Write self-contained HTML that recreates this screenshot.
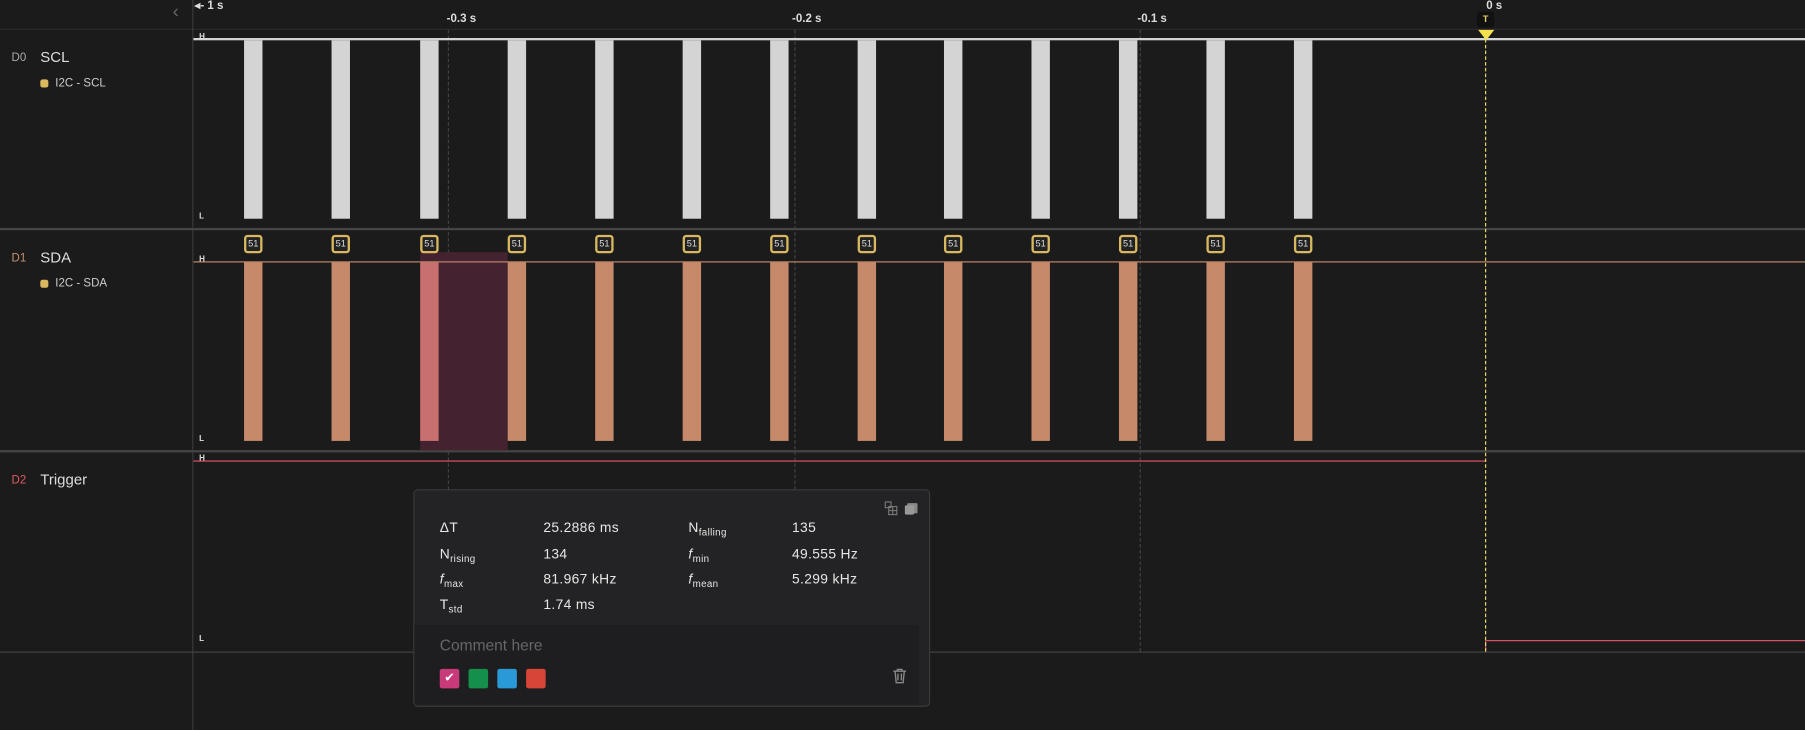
<!DOCTYPE html><html><head><style>
html,body{margin:0;padding:0;background:#1b1b1c;overflow:hidden}
body{width:1805px;height:730px}
#s{position:absolute;left:0;top:0;width:1568px;height:634px;transform:scale(1.1512);transform-origin:0 0;font-family:"Liberation Sans",sans-serif;color:#ddd}
.a{position:absolute}
.p{position:absolute;width:16px}
.sc{background:#d4d4d4;top:35px;height:155px}
.sd{background:#c68a6b;top:228px;height:155px}
.b{position:absolute;top:204px;width:12px;height:12px;border:2px solid #d9b860;border-radius:3px;background:#222;color:#ddd;font-size:8px;line-height:12px;text-align:center}
.g{position:absolute;width:0;border-left:1px dashed #444;top:26px;height:540px}
.t{position:absolute;font-size:10px;font-weight:bold;color:#ddd}
.lab{position:absolute;font-size:13px;color:#ddd}
.ch{position:absolute;font-size:10px}
.hl{position:absolute;font-size:7px;font-weight:bold;color:#ddd;left:173px}
.r{position:absolute;font-size:12px;color:#e6e6e6;letter-spacing:.3px}
.r sub{font-size:8.5px;vertical-align:-3px}
.sw{position:absolute;top:581px;width:17px;height:17px;border-radius:2px}
</style></head><body><div id="s">
<div class="a" style="left:0;top:25px;width:1568px;height:1px;background:#2c2c2e"></div>
<div class="a" style="left:167px;top:0;width:1px;height:634px;background:#3a3a3c"></div>
<div class="a" style="left:0;top:198px;width:1568px;height:2px;background:#444"></div>
<div class="a" style="left:0;top:391px;width:1568px;height:2px;background:#444"></div>
<div class="a" style="left:0;top:566px;width:1568px;height:1px;background:#444"></div>
<div class="a" style="left:150px;top:2px;color:#666;font-size:16px">&#8249;</div>
<div class="t" style="left:169px;top:0">◂- 1 s</div>
<div class="t" style="left:388px;top:11px">-0.3 s</div>
<div class="t" style="left:688px;top:11px">-0.2 s</div>
<div class="t" style="left:988px;top:11px">-0.1 s</div>
<div class="t" style="left:1291px;top:0">0 s</div>
<div class="g" style="left:389px"></div><div class="g" style="left:690px"></div><div class="g" style="left:990px"></div>
<div class="ch" style="left:10px;top:45px;color:#aaa">D0</div><div class="lab" style="left:35px;top:42px">SCL</div>
<div class="a" style="left:35px;top:69px;width:7px;height:7px;border-radius:2px;background:#d9b860"></div><div class="ch" style="left:48px;top:67px;color:#ccc">I2C - SCL</div>
<div class="ch" style="left:10px;top:219px;color:#c89070">D1</div><div class="lab" style="left:35px;top:216px">SDA</div>
<div class="a" style="left:35px;top:243px;width:7px;height:7px;border-radius:2px;background:#d9b860"></div><div class="ch" style="left:48px;top:241px;color:#ccc">I2C - SDA</div>
<div class="ch" style="left:10px;top:412px;color:#e05a60">D2</div><div class="lab" style="left:35px;top:409px">Trigger</div>
<div class="a" style="left:365px;top:219px;width:76px;height:172px;background:#44222f"></div>
<div class="a" style="left:168px;top:33px;width:1400px;height:2px;background:#d4d4d4"></div>
<div class="a" style="left:168px;top:227px;width:1400px;height:1px;background:#c68a6b"></div>
<div class="a" style="left:168px;top:400px;width:1123px;height:1px;background:#e0566a"></div>
<div class="a" style="left:1291px;top:556px;width:277px;height:1px;background:#e0566a"></div>
<div class="a" style="left:1290px;top:556px;width:1px;height:10px;background:#e0566a"></div>
<div class="hl" style="top:29px">H</div><div class="hl" style="top:185px">L</div>
<div class="hl" style="top:222px">H</div><div class="hl" style="top:378px">L</div>
<div class="hl" style="top:395px">H</div><div class="hl" style="top:552px">L</div>
<div class="p sc" style="left:212px"></div><div class="p sc" style="left:288px"></div><div class="p sc" style="left:365px"></div><div class="p sc" style="left:441px"></div><div class="p sc" style="left:517px"></div><div class="p sc" style="left:593px"></div><div class="p sc" style="left:669px"></div><div class="p sc" style="left:745px"></div><div class="p sc" style="left:820px"></div><div class="p sc" style="left:896px"></div><div class="p sc" style="left:972px"></div><div class="p sc" style="left:1048px"></div><div class="p sc" style="left:1124px"></div>
<div class="p sd" style="left:212px"></div><div class="p sd" style="left:288px"></div><div class="p sd" style="left:365px;background:#c87070"></div><div class="p sd" style="left:441px"></div><div class="p sd" style="left:517px"></div><div class="p sd" style="left:593px"></div><div class="p sd" style="left:669px"></div><div class="p sd" style="left:745px"></div><div class="p sd" style="left:820px"></div><div class="p sd" style="left:896px"></div><div class="p sd" style="left:972px"></div><div class="p sd" style="left:1048px"></div><div class="p sd" style="left:1124px"></div>
<div class="b" style="left:212px">51</div><div class="b" style="left:288px">51</div><div class="b" style="left:365px">51</div><div class="b" style="left:441px">51</div><div class="b" style="left:517px">51</div><div class="b" style="left:593px">51</div><div class="b" style="left:669px">51</div><div class="b" style="left:745px">51</div><div class="b" style="left:820px">51</div><div class="b" style="left:896px">51</div><div class="b" style="left:972px">51</div><div class="b" style="left:1048px">51</div><div class="b" style="left:1124px">51</div>
<div class="a" style="left:1290px;top:34px;height:532px;border-left:1px dashed #f0e060"></div>
<div class="a" style="left:1283px;top:10px;width:15px;height:14px;background:#111;border-radius:3px;color:#e8d060;font-size:8px;font-weight:bold;text-align:center;line-height:14px">T</div>
<div class="a" style="left:1284px;top:26px;width:0;height:0;border-left:7px solid transparent;border-right:7px solid transparent;border-top:9px solid #f5e050"></div>
<div class="a" style="left:359px;top:425px;width:447px;height:187px;background:#232325;border:1px solid #3a3a3c;border-radius:4px"></div>
<div class="a" style="left:360px;top:543px;width:438px;height:69px;background:#1e1e20"></div>
<svg class="a" style="left:768px;top:435px" width="30" height="13"><rect x="1" y="1" width="5" height="5" fill="none" stroke="#777"/><rect x="4" y="5" width="7" height="7" fill="none" stroke="#777"/><line x1="4" y1="8.5" x2="11" y2="8.5" stroke="#777"/><line x1="7.5" y1="5" x2="7.5" y2="12" stroke="#777"/><rect x="20" y="2" width="9" height="9" rx="1" fill="#888"/><rect x="18" y="4" width="8" height="8" rx="1" fill="#999"/></svg>
<div class="r" style="left:382px;top:451px">ΔT</div><div class="r" style="left:472px;top:451px">25.2886 ms</div>
<div class="r" style="left:598px;top:451px">N<sub>falling</sub></div><div class="r" style="left:688px;top:451px">135</div>
<div class="r" style="left:382px;top:474px">N<sub>rising</sub></div><div class="r" style="left:472px;top:474px">134</div>
<div class="r" style="left:598px;top:474px"><i>f</i><sub>min</sub></div><div class="r" style="left:688px;top:474px">49.555 Hz</div>
<div class="r" style="left:382px;top:496px"><i>f</i><sub>max</sub></div><div class="r" style="left:472px;top:496px">81.967 kHz</div>
<div class="r" style="left:598px;top:496px"><i>f</i><sub>mean</sub></div><div class="r" style="left:688px;top:496px">5.299 kHz</div>
<div class="r" style="left:382px;top:518px">T<sub>std</sub></div><div class="r" style="left:472px;top:518px">1.74 ms</div>
<div class="a" style="left:382px;top:553px;font-size:13.5px;color:#666">Comment here</div>
<div class="sw" style="left:382px;background:#c83a7a;color:#fff;font-size:11px;text-align:center;line-height:17px">✔</div>
<div class="sw" style="left:407px;background:#14904a"></div>
<div class="sw" style="left:432px;background:#2a9ad6"></div>
<div class="sw" style="left:457px;background:#d64535"></div>
<svg class="a" style="left:775px;top:580px" width="13" height="14"><path d="M1 3h11M4.5 3V1.5h4V3M2.5 3l1 10h6l1-10M5 5v6M8 5v6" fill="none" stroke="#888" stroke-width="1.2"/></svg>
</div></body></html>
